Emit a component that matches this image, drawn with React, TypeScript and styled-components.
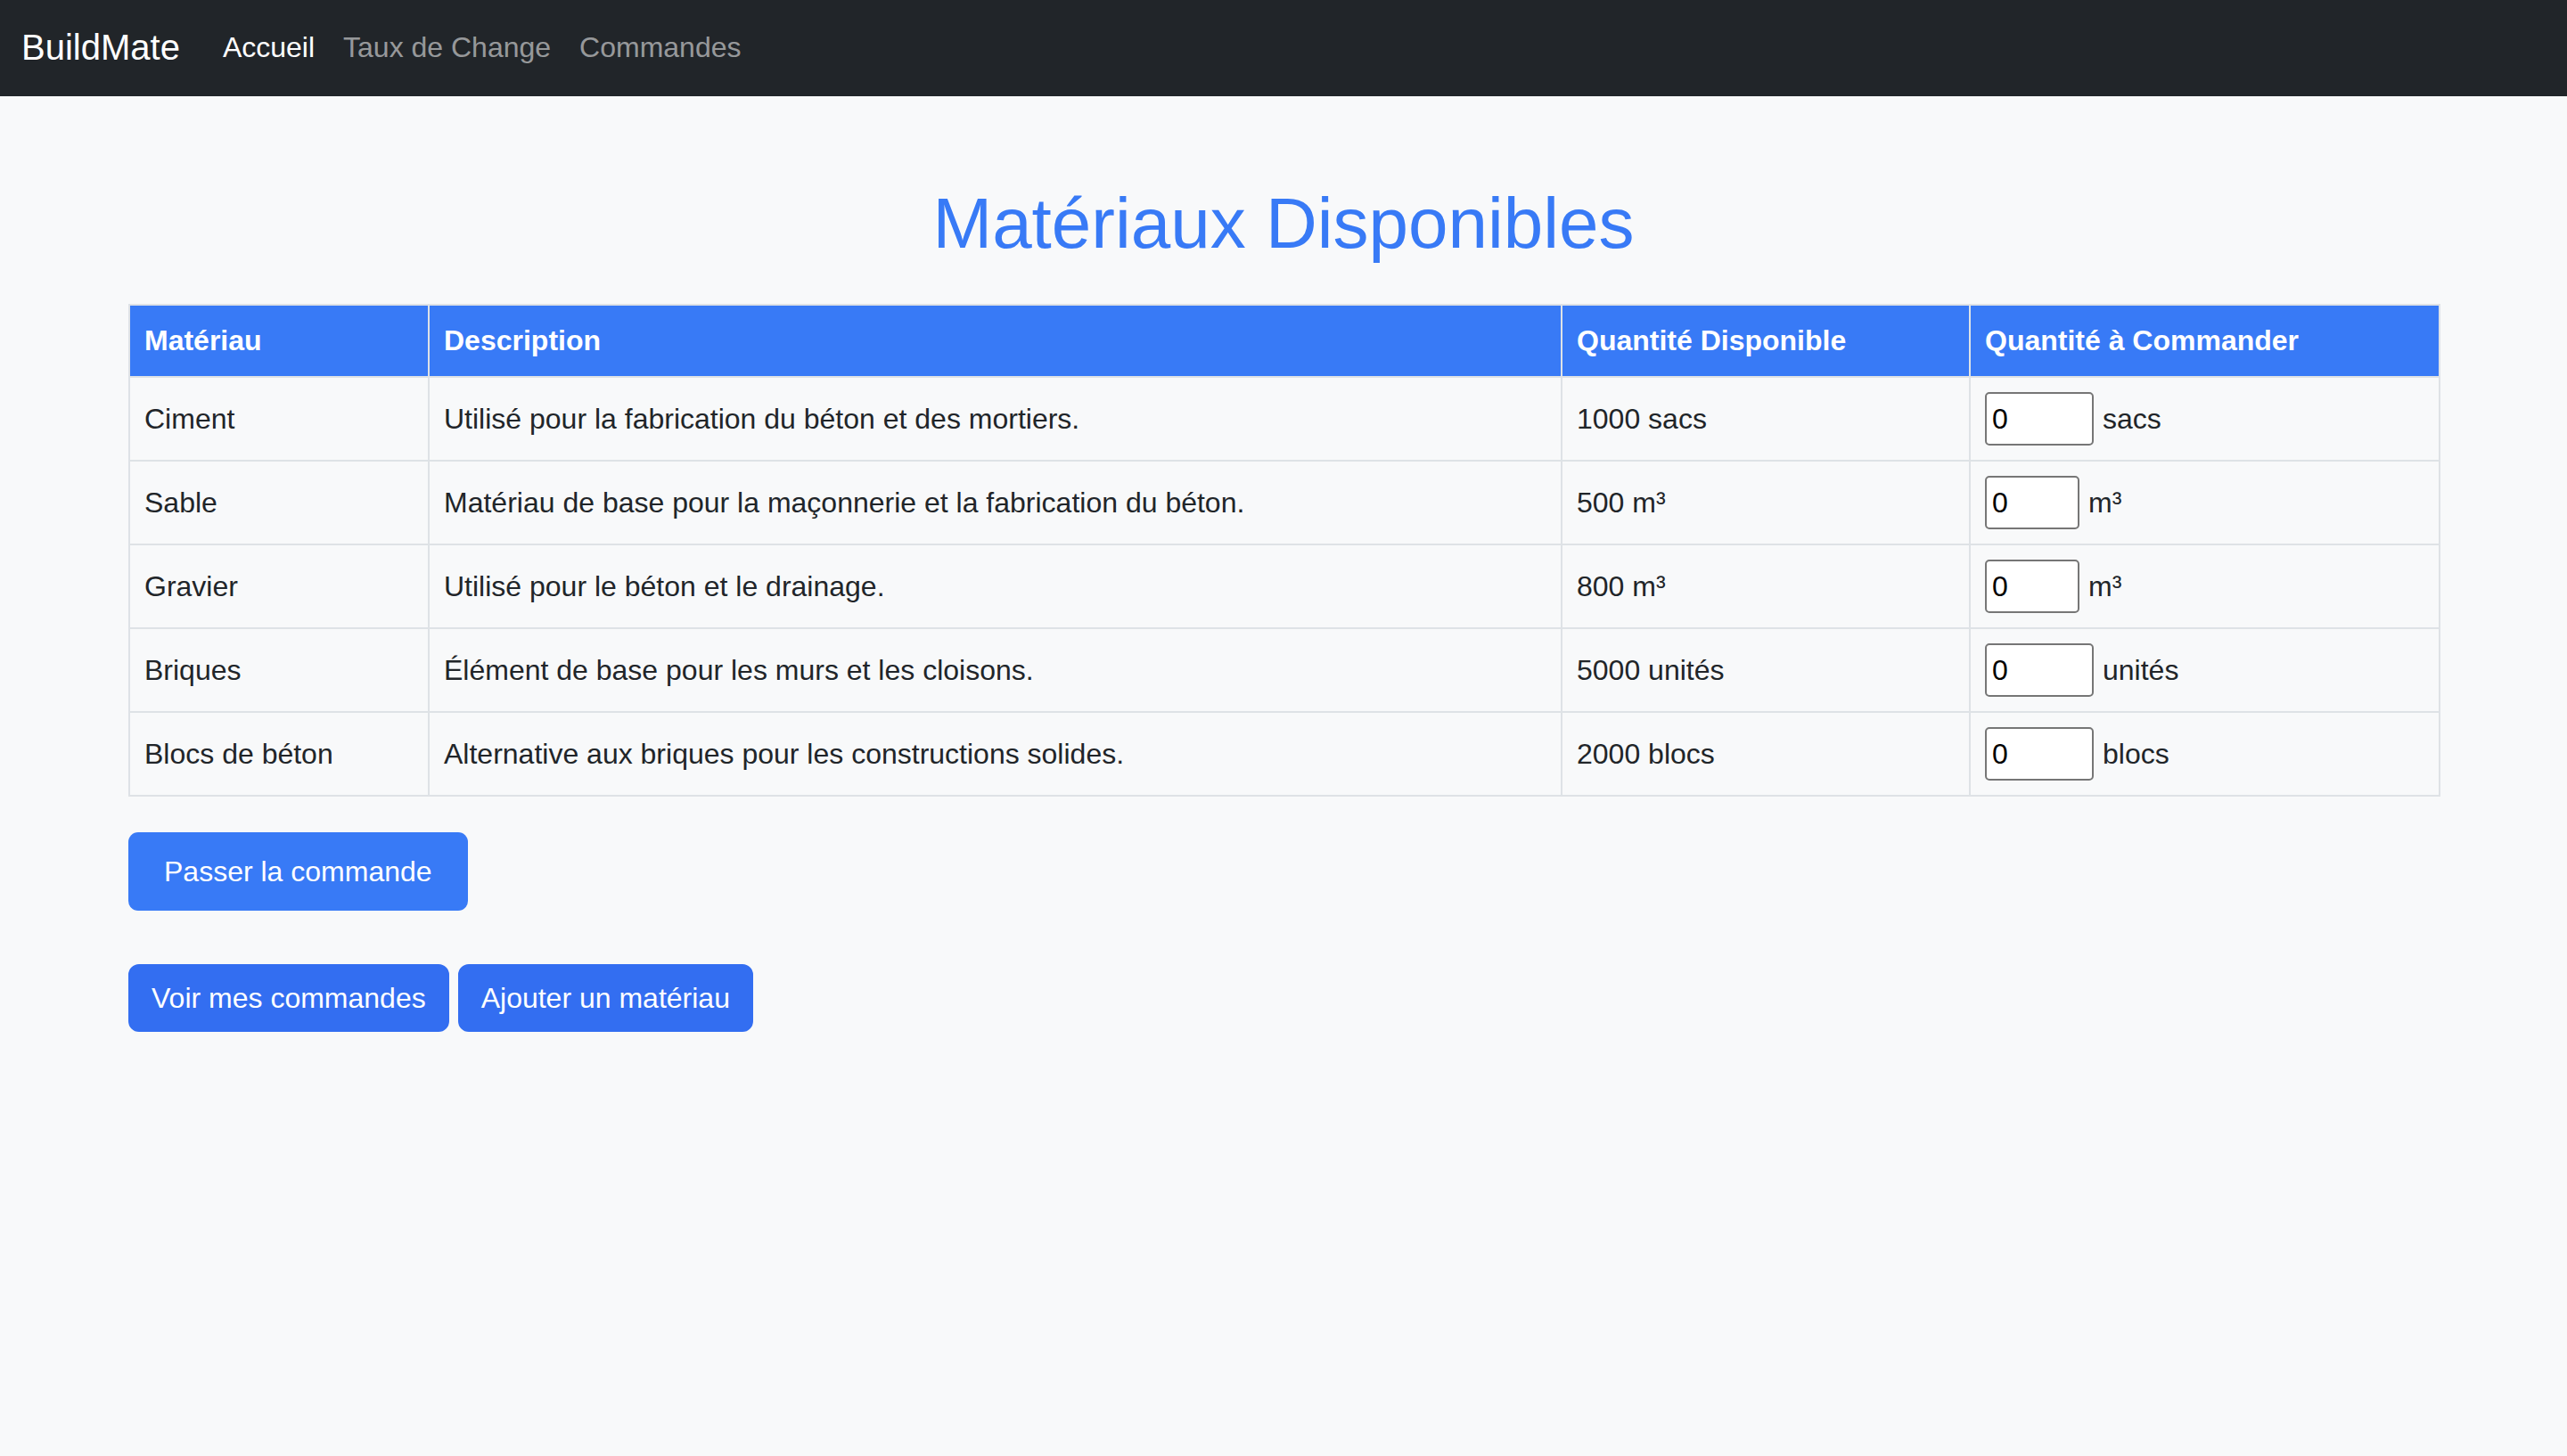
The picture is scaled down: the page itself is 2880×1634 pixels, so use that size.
import React from "react";
import styled, { createGlobalStyle } from "styled-components";

const GlobalStyle = createGlobalStyle`
  html, body {
    margin: 0;
    padding: 0;
    background: #f8f9fa;
    color: #212529;
    font-family: "Liberation Sans", Arial, Helvetica, sans-serif;
    font-size: 32px;
    line-height: 1.5;
  }
  * { box-sizing: border-box; }
`;

const Navbar = styled.nav`
  height: 108px;
  background: #212529;
  display: flex;
  align-items: center;
  padding: 0 24px 3px;
`;

const Brand = styled.a`
  color: #ffffff;
  font-size: 40px;
  line-height: 60px;
  margin-right: 32px;
  text-decoration: none;
`;

const NavList = styled.div`
  display: flex;
  align-items: center;
`;

const NavLink = styled.a<{ $active?: boolean }>`
  color: ${(p) => (p.$active ? "#ffffff" : "rgba(255,255,255,0.55)")};
  font-size: 32px;
  line-height: 48px;
  padding: 0 16px;
  text-decoration: none;
`;

const Container = styled.main`
  width: 2592px;
  margin: 0 auto;
`;

const Title = styled.h1`
  margin: 95px 0 42px;
  font-size: 80px;
  font-weight: 400;
  line-height: 96px;
  text-align: center;
  color: #387af6;
`;

const Table = styled.table`
  width: 100%;
  margin: 0 0 40px;
  table-layout: fixed;
  border-collapse: collapse;
  border: 2px solid #dee2e6;
`;

const HeadCell = styled.th`
  background: #387af6;
  color: #ffffff;
  font-weight: 700;
  text-align: left;
  padding: 16px;
  line-height: 47px;
  border: 2px solid #dee2e6;
`;

const Cell = styled.td`
  padding: 16px;
  border: 2px solid #dee2e6;
  vertical-align: middle;
  line-height: 48px;
  background: #f8f9fa;
`;

const QtyWrap = styled.div`
  display: flex;
  align-items: center;
  gap: 10px;
`;

const QtyInput = styled.input<{ $w: number }>`
  width: ${(p) => p.$w}px;
  height: 60px;
  border: 2px solid #767676;
  border-radius: 5px;
  background: #ffffff;
  padding: 0 6px;
  font-family: "Liberation Sans", Arial, sans-serif;
  font-size: 32px;
  color: #000000;
  outline: none;
  -moz-appearance: textfield;
  &::-webkit-outer-spin-button,
  &::-webkit-inner-spin-button {
    -webkit-appearance: none;
    margin: 0;
  }
`;

const PrimaryButton = styled.button`
  display: inline-block;
  height: 88px;
  padding: 0 40px;
  border: none;
  border-radius: 11px;
  background: #387af6;
  color: #ffffff;
  font-family: "Liberation Sans", Arial, sans-serif;
  font-size: 32px;
  line-height: 48px;
  cursor: pointer;
`;

const ActionRow = styled.div`
  display: flex;
  gap: 10px;
  margin-top: 60px;
`;

const LinkButton = styled.a`
  display: inline-block;
  height: 76px;
  padding: 12px 24px;
  border: 2px solid #336ef1;
  border-radius: 12px;
  background: #336ef1;
  color: #ffffff;
  font-size: 32px;
  line-height: 48px;
  text-decoration: none;
`;

type Material = {
  name: string;
  desc: string;
  available: string;
  unit: string;
  inputWidth: number;
};

const materials: Material[] = [
  { name: "Ciment", desc: "Utilisé pour la fabrication du béton et des mortiers.", available: "1000 sacs", unit: "sacs", inputWidth: 122 },
  { name: "Sable", desc: "Matériau de base pour la maçonnerie et la fabrication du béton.", available: "500 m³", unit: "m³", inputWidth: 106 },
  { name: "Gravier", desc: "Utilisé pour le béton et le drainage.", available: "800 m³", unit: "m³", inputWidth: 106 },
  { name: "Briques", desc: "Élément de base pour les murs et les cloisons.", available: "5000 unités", unit: "unités", inputWidth: 122 },
  { name: "Blocs de béton", desc: "Alternative aux briques pour les constructions solides.", available: "2000 blocs", unit: "blocs", inputWidth: 122 },
];

export default function App() {
  return (
    <>
      <GlobalStyle />
      <Navbar>
        <Brand href="#">BuildMate</Brand>
        <NavList>
          <NavLink href="#" $active>Accueil</NavLink>
          <NavLink href="#">Taux de Change</NavLink>
          <NavLink href="#">Commandes</NavLink>
        </NavList>
      </Navbar>
      <Container>
        <Title>Matériaux Disponibles</Title>
        <Table>
          <colgroup>
            <col style={{ width: 336 }} />
            <col style={{ width: 1271 }} />
            <col style={{ width: 458 }} />
            <col style={{ width: 527 }} />
          </colgroup>
          <thead>
            <tr>
              <HeadCell>Matériau</HeadCell>
              <HeadCell>Description</HeadCell>
              <HeadCell>Quantité Disponible</HeadCell>
              <HeadCell>Quantité à Commander</HeadCell>
            </tr>
          </thead>
          <tbody>
            {materials.map((m) => (
              <tr key={m.name}>
                <Cell>{m.name}</Cell>
                <Cell>{m.desc}</Cell>
                <Cell>{m.available}</Cell>
                <Cell>
                  <QtyWrap>
                    <QtyInput type="number" defaultValue={0} min={0} $w={m.inputWidth} />
                    <span>{m.unit}</span>
                  </QtyWrap>
                </Cell>
              </tr>
            ))}
          </tbody>
        </Table>
        <PrimaryButton type="button">Passer la commande</PrimaryButton>
        <ActionRow>
          <LinkButton href="#">Voir mes commandes</LinkButton>
          <LinkButton href="#">Ajouter un matériau</LinkButton>
        </ActionRow>
      </Container>
    </>
  );
}
